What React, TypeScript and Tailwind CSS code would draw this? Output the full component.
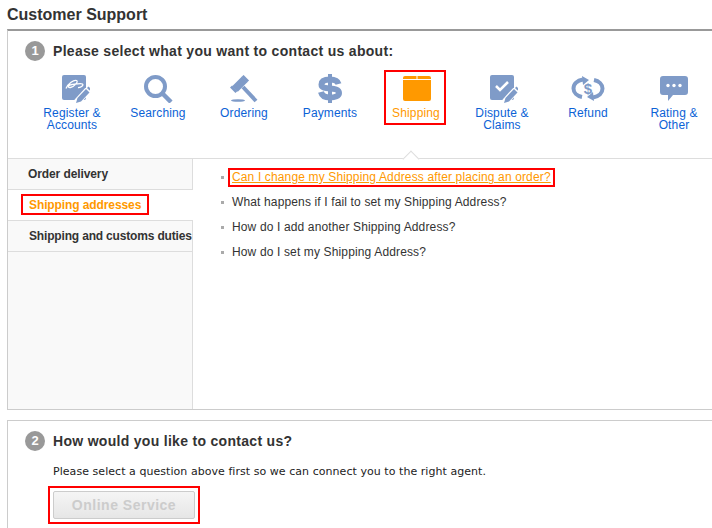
const ICON = '#7f9bc8'

function Pen() {
  return (
    <>
      <path d="M15 27L26 15" stroke="#fff" strokeWidth="7" />
      <path d="M14 28l1.500-5 8.500-9 3.500 3.500-8.500 9Z" fill={ICON} />
      <path d="M25 13l1.500-1.500 1.500 1.500v2l-.5.500Z" fill={ICON} />
    </>
  )
}

function RegisterIcon() {
  return (
    <svg className="ml-[8px]" width="28" height="28" viewBox="0 0 28 28">
      <rect width="24" height="25" rx="2" fill={ICON} />
      <path d="M4 13.500c2-5 8-9 10.500-8S12 12 8.500 12.500 6 10 10 9.500s9-1.500 10.500-.5-1.500 4-4.500 3.500" fill="none" stroke="#fff" strokeWidth="1.300" />
      <Pen />
    </svg>
  )
}

function SearchIcon() {
  return (
    <svg width="29" height="28" viewBox="0 0 29 28">
      <circle cx="11.500" cy="11.500" r="9.500" fill="none" stroke={ICON} strokeWidth="4" />
      <path d="M18 18l9 9" stroke={ICON} strokeWidth="4.500" />
    </svg>
  )
}

function GavelIcon() {
  return (
    <svg width="28" height="28" viewBox="0 0 28 28">
      <path d="M5 14L14.500 4.500" stroke={ICON} strokeWidth="8" />
      <path d="M1 11.500L6.500 17M12.500 1L18 6.500" stroke={ICON} strokeWidth="3" />
      <path d="M13 12l13 14" stroke={ICON} strokeWidth="4" />
      <ellipse cx="8" cy="25.500" rx="7" ry="1.300" fill={ICON} />
    </svg>
  )
}

function DollarIcon() {
  return (
    <svg width="24" height="29" viewBox="0 0 24 29">
      <path d="M10 0h4v29h-4Z" fill={ICON} />
      <path d="M20.500 10C19.500 6.500 16 5.500 12 5.500 7 5.500 3.500 7 3.500 10.500 3.500 17.500 21 11.500 21 19 21 22 17 23.500 12 23.500 7.500 23.500 4 22 3 18" fill="none" stroke={ICON} strokeWidth="6" />
    </svg>
  )
}

function ShippingIcon() {
  return (
    <svg className="ml-[2px]" width="28" height="25" viewBox="0 0 28 25">
      <path d="M2 0h11.500v3H0V2a2 2 0 0 1 2-2Z" fill="#ff9900" />
      <path d="M14.500 0H26a2 2 0 0 1 2 2v1H14.500Z" fill="#ff9900" />
      <path d="M0 4h28v19a2 2 0 0 1-2 2H2a2 2 0 0 1-2-2Z" fill="#ff9900" />
    </svg>
  )
}

function DisputeIcon() {
  return (
    <svg className="ml-[4px]" width="28" height="28" viewBox="0 0 28 28">
      <rect width="24" height="25" rx="2" fill={ICON} />
      <path d="M6 11l4 4 8-8" fill="none" stroke="#fff" strokeWidth="2.500" />
      <Pen />
    </svg>
  )
}

function RefundIcon() {
  return (
    <svg width="34" height="25" viewBox="0 0 34 25">
      <path d="M12 3.500C6 4.500 2.500 8 2.500 12.500c0 4 3.500 7.500 8.500 8.500" fill="none" stroke={ICON} strokeWidth="4" />
      <path d="M22 21.500c6-1 9.500-4.500 9.500-9 0-4-3.500-7.500-8.500-8.500" fill="none" stroke={ICON} strokeWidth="4" />
      <path d="M11 0l7 4-6 5ZM23 25l-7-4 6-5Z" fill={ICON} />
      <text x="17" y="17.500" textAnchor="middle" fontSize="15" fontWeight="700" fontFamily="Liberation Sans" fill={ICON}>$</text>
    </svg>
  )
}

function RatingIcon() {
  return (
    <svg width="28" height="25" viewBox="0 0 28 25">
      <path d="M3 0h22a3 3 0 0 1 3 3v13a3 3 0 0 1-3 3H13l-5 6v-6H3a3 3 0 0 1-3-3V3a3 3 0 0 1 3-3Z" fill={ICON} />
      <circle cx="8" cy="9.500" r="1.700" fill="#fff" />
      <circle cx="14" cy="9.500" r="1.700" fill="#fff" />
      <circle cx="20" cy="9.500" r="1.700" fill="#fff" />
    </svg>
  )
}

function Step({ n }: { n: number }) {
  return (
    <span className="flex h-5 w-5 items-center justify-center rounded-full bg-[#999] text-[13px] font-bold text-white">
      {n}
    </span>
  )
}

function Category({ icon, label, active }: { icon: React.ReactNode; label: React.ReactNode; active?: boolean }) {
  return (
    <div className={`relative flex w-[86px] shrink-0 flex-col items-center text-center text-[12px] leading-[12px] tracking-[0.14px] ${active ? 'text-[#ff9900]' : 'text-[#0b62d6]'}`}>
      <div className="flex h-[31px] items-center justify-center">{icon}</div>
      <div className="mt-[3px]">{label}</div>
      {active && <div className="absolute top-[-3px] left-[11px] h-[55px] w-[62px] border-2 border-[#f00]" />}
    </div>
  )
}

const questions = [
  'What happens if I fail to set my Shipping Address?',
  'How do I add another Shipping Address?',
  'How do I set my Shipping Address?',
]

export default function App() {
  return (
    <div className="h-[528px] w-[712px] overflow-hidden bg-white pl-[7px] font-['Liberation_Sans',sans-serif] text-[#333]">
      <h1 className="h-[29px] pt-[5px] text-[16px] leading-[20px] font-bold">Customer Support</h1>

      <section className="w-[740px] border border-t-2 border-[#ccc] border-t-[#999]">
        <div className="relative h-[128px] border-b border-[#ddd]">
          <div className="flex items-center gap-[8px] pt-[10px] pl-[17px]">
            <Step n={1} />
            <h2 className="text-[14px] leading-[20px] font-bold tracking-[0.3px]">Please select what you want to contact us about:</h2>
          </div>
          <div className="mt-[12px] flex pl-[21px]">
            <Category icon={<RegisterIcon />} label={<>Register &<br />Accounts</>} />
            <Category icon={<SearchIcon />} label="Searching" />
            <Category icon={<GavelIcon />} label="Ordering" />
            <Category icon={<DollarIcon />} label="Payments" />
            <Category active icon={<ShippingIcon />} label="Shipping" />
            <Category icon={<DisputeIcon />} label={<>Dispute &<br />Claims</>} />
            <Category icon={<RefundIcon />} label="Refund" />
            <Category icon={<RatingIcon />} label={<>Rating &<br />Other</>} />
          </div>
          {/* little notch under the active category */}
          <div className="absolute bottom-[-7px] left-[397px] h-[12px] w-[12px] rotate-45 border-t border-l border-[#ddd] bg-white" />
        </div>

        <div className="flex h-[250px]">
          <div className="w-[185px] shrink-0 bg-[#f9f9f9] text-[12px] font-bold">
            <div className="h-[31px] border-r border-b border-[#ddd] pt-[8px] pl-[20px] leading-[14px] tracking-[-0.1px]">Order delivery</div>
            <div className="relative h-[31px] border-b border-[#ddd] bg-white pt-[8px] pl-[21px] leading-[14px] tracking-[-0.1px] text-[#ff9900]">
              Shipping addresses
              <div className="absolute top-[4px] left-[13px] h-[21px] w-[128px] border-2 border-[#f00]" />
            </div>
            <div className="h-[31px] border-r border-b border-[#ddd] pt-[8px] pl-[21px] leading-[14px] tracking-[-0.17px] whitespace-nowrap">Shipping and customs duties</div>
            <div className="h-[157px] border-r border-[#ddd]" />
          </div>
          <ul className="flex-1 pt-[6px] pl-[28px] text-[12px] leading-[25px] tracking-[0.14px]">
            <li className="relative flex items-center">
              <span className="mr-[8px] h-[3px] w-[3px] bg-[#aaa]" />
              <span className="text-[#ff9900] underline">Can I change my Shipping Address after placing an order?</span>
              <div className="absolute top-[3px] left-[7px] h-[19px] w-[327px] border-2 border-[#f00]" />
            </li>
            {questions.map((q) => (
              <li key={q} className="flex items-center">
                <span className="mr-[8px] h-[3px] w-[3px] bg-[#aaa]" />
                {q}
              </li>
            ))}
          </ul>
        </div>
      </section>

      <section className="mt-[10px] h-[140px] w-[740px] border border-[#ccc] pt-[10px] pl-[17px]">
        <div className="flex items-center gap-[8px]">
          <Step n={2} />
          <h2 className="text-[14px] leading-[20px] font-bold tracking-[0.3px]">How would you like to contact us?</h2>
        </div>
        <p className="mt-[13px] pl-[28px] font-['DejaVu_Sans',sans-serif] text-[11px] leading-[16px] tracking-[0.05px] text-[#222]">
          Please select a question above first so we can connect you to the right agent.
        </p>
        <div className="mt-[6px] ml-[23px] w-[152px] border-2 border-[#f00] p-[3px]">
          <button className="block h-[28px] w-full rounded-[2px] border border-[#ccc] bg-gradient-to-b from-[#f5f5f5] to-[#e6e6e6] text-[14px] font-bold tracking-[0.5px] text-[#ccc]">
            Online Service
          </button>
        </div>
      </section>
    </div>
  )
}
